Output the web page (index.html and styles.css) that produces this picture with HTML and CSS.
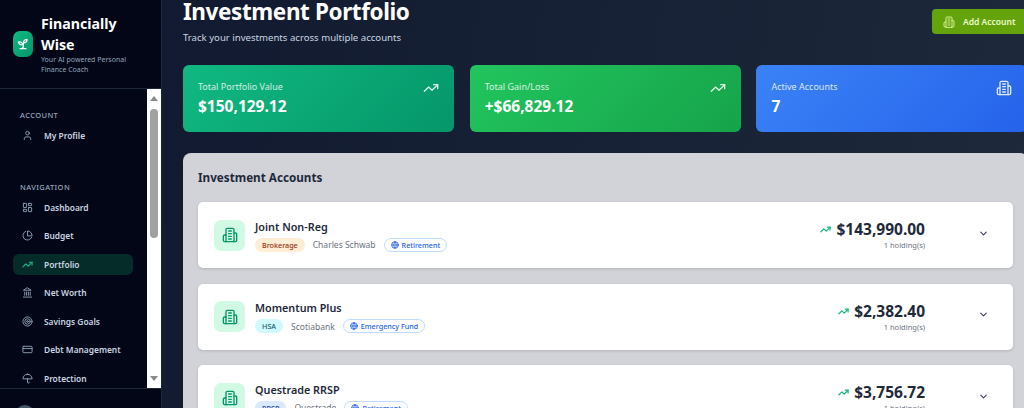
FILE: index.html
```html
<!DOCTYPE html>
<html lang="en">
<head>
<meta charset="utf-8">
<title>Investment Portfolio</title>
<link rel="stylesheet" href="styles.css">
</head>
<body>
<svg class="defs" width="0" height="0" aria-hidden="true">
  <symbol id="i-trend" viewBox="0 0 24 24"><polyline points="22 7 13.5 15.5 8.5 10.5 2 17"/><polyline points="16 7 22 7 22 13"/></symbol>
  <symbol id="i-user" viewBox="0 0 24 24"><path d="M19 21v-2a4 4 0 0 0-4-4H9a4 4 0 0 0-4 4v2"/><circle cx="12" cy="7" r="4"/></symbol>
  <symbol id="i-dash" viewBox="0 0 24 24"><rect x="3" y="3" width="7" height="9" rx="1"/><rect x="14" y="3" width="7" height="5" rx="1"/><rect x="14" y="12" width="7" height="9" rx="1"/><rect x="3" y="16" width="7" height="5" rx="1"/></symbol>
  <symbol id="i-pie" viewBox="0 0 24 24"><path d="M21.21 15.89A10 10 0 1 1 8 2.83"/><path d="M22 12A10 10 0 0 0 12 2v10z"/></symbol>
  <symbol id="i-bank" viewBox="0 0 24 24"><line x1="3" y1="22" x2="21" y2="22"/><line x1="6" y1="18" x2="6" y2="11"/><line x1="10" y1="18" x2="10" y2="11"/><line x1="14" y1="18" x2="14" y2="11"/><line x1="18" y1="18" x2="18" y2="11"/><polygon points="12 2 20 7 4 7"/></symbol>
  <symbol id="i-target" viewBox="0 0 24 24"><circle cx="12" cy="12" r="10"/><circle cx="12" cy="12" r="6"/><circle cx="12" cy="12" r="2"/></symbol>
  <symbol id="i-card" viewBox="0 0 24 24"><rect x="2" y="5" width="20" height="14" rx="2"/><line x1="2" y1="10" x2="22" y2="10"/></symbol>
  <symbol id="i-umbrella" viewBox="0 0 24 24"><path d="M22 12a10.060 10.060 0 0 0-20 0Z"/><path d="M12 12v8a2 2 0 0 0 4 0"/><path d="M12 2v1"/></symbol>
  <symbol id="i-building" viewBox="0 0 24 24"><path d="M6 22V4a2 2 0 0 1 2-2h8a2 2 0 0 1 2 2v18Z"/><path d="M6 12H4a2 2 0 0 0-2 2v6a2 2 0 0 0 2 2h2"/><path d="M18 9h2a2 2 0 0 1 2 2v9a2 2 0 0 1-2 2h-2"/><path d="M10 6h4"/><path d="M10 10h4"/><path d="M10 14h4"/><path d="M10 18h4"/></symbol>
  <symbol id="i-sprout" viewBox="0 0 24 24"><path d="M7 20h10"/><path d="M10 20c5.500-2.500.8-6.400 3-10"/><path d="M9.500 9.400c1.100.8 1.800 2.200 2.300 3.700-2 .4-3.500.4-4.800-.3-1.200-.6-2.300-1.900-3-4.200 2.800-.5 4.400 0 5.500.8z"/><path d="M14.100 6a7 7 0 0 0-1.100 4c1.900-.1 3.300-.6 4.300-1.400 1-1 1.600-2.300 1.700-4.600-2.700.1-4 1-4.900 2z"/></symbol>
  <symbol id="i-globe" viewBox="0 0 24 24"><circle cx="12" cy="12" r="10"/><path d="M12 2a14.500 14.500 0 0 0 0 20 14.500 14.500 0 0 0 0-20"/><path d="M2 12h20"/></symbol>
  <symbol id="i-chevron" viewBox="0 0 24 24"><polyline points="6 9 12 15 18 9"/></symbol>
</svg>

<div class="app">
  <aside class="sidebar">
    <header class="brand">
      <div class="logo"><svg class="ico logo-ico"><use href="#i-sprout"/></svg></div>
      <div class="brand-text">
        <div class="brand-name">Financially Wise</div>
        <div class="brand-tag">Your AI powered Personal Finance Coach</div>
      </div>
    </header>
    <div class="nav-wrap">
      <nav class="nav">
        <div class="nav-label">ACCOUNT</div>
        <a class="nav-item"><svg class="ico nav-ico"><use href="#i-user"/></svg>My Profile</a>
        <div class="nav-label nav-label-second">NAVIGATION</div>
        <a class="nav-item"><svg class="ico nav-ico"><use href="#i-dash"/></svg>Dashboard</a>
        <a class="nav-item"><svg class="ico nav-ico"><use href="#i-pie"/></svg>Budget</a>
        <a class="nav-item active"><svg class="ico nav-ico"><use href="#i-trend"/></svg>Portfolio</a>
        <a class="nav-item"><svg class="ico nav-ico"><use href="#i-bank"/></svg>Net Worth</a>
        <a class="nav-item"><svg class="ico nav-ico"><use href="#i-target"/></svg>Savings Goals</a>
        <a class="nav-item"><svg class="ico nav-ico"><use href="#i-card"/></svg>Debt Management</a>
        <a class="nav-item"><svg class="ico nav-ico"><use href="#i-umbrella"/></svg>Protection</a>
      </nav>
      <div class="scrollbar">
        <span class="arrow-up"></span>
        <span class="thumb"></span>
        <span class="arrow-down"></span>
      </div>
    </div>
    <footer class="side-foot"><span class="avatar"></span></footer>
  </aside>

  <main class="main">
    <div class="content">
      <section class="page-head">
        <div>
          <h1 class="title">Investment Portfolio</h1>
          <p class="subtitle">Track your investments across multiple accounts</p>
        </div>
        <button class="add-btn"><svg class="ico add-ico"><use href="#i-building"/></svg><span>Add Account</span></button>
      </section>

      <section class="stats">
        <div class="stat stat-emerald">
          <div><div class="stat-label">Total Portfolio Value</div><div class="stat-value">$150,129.12</div></div>
          <svg class="ico stat-ico"><use href="#i-trend"/></svg>
        </div>
        <div class="stat stat-green">
          <div><div class="stat-label">Total Gain/Loss</div><div class="stat-value">+$66,829.12</div></div>
          <svg class="ico stat-ico"><use href="#i-trend"/></svg>
        </div>
        <div class="stat stat-blue">
          <div><div class="stat-label">Active Accounts</div><div class="stat-value">7</div></div>
          <svg class="ico stat-ico"><use href="#i-building"/></svg>
        </div>
      </section>

      <section class="panel">
        <h2 class="panel-title">Investment Accounts</h2>
        <article class="account">
          <div class="acc-icon"><svg class="ico"><use href="#i-building"/></svg></div>
          <div class="acc-info">
            <div class="acc-name">Joint Non-Reg</div>
            <div class="acc-meta">
              <span class="tag tag-orange">Brokerage</span>
              <span class="provider">Charles Schwab</span>
              <span class="goal"><svg class="ico goal-ico"><use href="#i-globe"/></svg>Retirement</span>
            </div>
          </div>
          <div class="acc-value">
            <div class="amount"><svg class="ico amt-ico"><use href="#i-trend"/></svg>$143,990.00</div>
            <div class="holdings">1 holding(s)</div>
          </div>
          <svg class="ico chev"><use href="#i-chevron"/></svg>
        </article>
        <article class="account">
          <div class="acc-icon"><svg class="ico"><use href="#i-building"/></svg></div>
          <div class="acc-info">
            <div class="acc-name">Momentum Plus</div>
            <div class="acc-meta">
              <span class="tag tag-cyan">HSA</span>
              <span class="provider">Scotiabank</span>
              <span class="goal"><svg class="ico goal-ico"><use href="#i-globe"/></svg>Emergency Fund</span>
            </div>
          </div>
          <div class="acc-value">
            <div class="amount"><svg class="ico amt-ico"><use href="#i-trend"/></svg>$2,382.40</div>
            <div class="holdings">1 holding(s)</div>
          </div>
          <svg class="ico chev"><use href="#i-chevron"/></svg>
        </article>
        <article class="account">
          <div class="acc-icon"><svg class="ico"><use href="#i-building"/></svg></div>
          <div class="acc-info">
            <div class="acc-name">Questrade RRSP</div>
            <div class="acc-meta">
              <span class="tag tag-blue">RRSP</span>
              <span class="provider">Questrade</span>
              <span class="goal"><svg class="ico goal-ico"><use href="#i-globe"/></svg>Retirement</span>
            </div>
          </div>
          <div class="acc-value">
            <div class="amount"><svg class="ico amt-ico"><use href="#i-trend"/></svg>$3,756.72</div>
            <div class="holdings">1 holding(s)</div>
          </div>
          <svg class="ico chev"><use href="#i-chevron"/></svg>
        </article>
      </section>
    </div>
  </main>
</div>
</body>
</html>
```
FILE: styles.css
```css
* { box-sizing: border-box; }
html, body { margin: 0; height: 408px; overflow: hidden; }
body { font-family: "Noto Sans", "Open Sans", sans-serif; background: #131b30; }
.defs { position: absolute; }
.ico { fill: none; stroke: currentColor; stroke-width: 2; stroke-linecap: round; stroke-linejoin: round; display: block; flex: none; }

.app { display: flex; width: 1024px; height: 408px; overflow: hidden; }

/* Sidebar */
.sidebar { width: 162px; flex: none; height: 408px; display: flex; flex-direction: column; background: #020617; border-right: 1px solid #1e293b; color: #e2e8f0; }
.brand { height: 89px; flex: none; display: flex; align-items: center; gap: 8px; padding: 0 13px; border-bottom: 1px solid #1e293b; }
.logo { width: 20px; height: 26px; flex: none; border-radius: 7px; background: linear-gradient(135deg, #10b981, #059669); display: flex; align-items: center; justify-content: center; color: #fff; }
.logo-ico { width: 14px; height: 14px; stroke-width: 2.200; }
.brand-name { font-size: 14.200px; line-height: 21px; font-weight: 700; color: #fff; }
.brand-tag { font-size: 7px; line-height: 10px; color: #94a3b8; }

.nav-wrap { flex: 1; min-height: 0; display: flex; }
.nav { flex: 1; min-width: 0; overflow: hidden; padding: 21px 14px 0 13px; display: flex; flex-direction: column; }
.nav-label { font-size: 7.500px; line-height: 11px; font-weight: 500; letter-spacing: .4px; color: #94a3b8; padding-left: 7px; margin-bottom: 4px; }
.nav-label-second { margin-top: 28px; margin-bottom: 4.500px; }
.nav-item { height: 20.500px; flex: none; margin-bottom: 8px; display: flex; align-items: center; gap: 11px; padding-left: 9px; border-radius: 6px; font-size: 8.400px; font-weight: 600; color: #cbd5e1; }
.nav-item.active { background: #062c2a; color: #cbd5e1; }
.nav-item.active .nav-ico { color: #10b981; stroke-width: 2.500; }
.nav-ico { width: 11px; height: 11px; color: #94a3b8; stroke-width: 2; }

.scrollbar { width: 14px; flex: none; background: #fff; display: flex; flex-direction: column; align-items: center; padding: 7px 0 4px; }
.arrow-up { width: 0; height: 0; border-left: 4px solid transparent; border-right: 4px solid transparent; border-bottom: 5px solid #8a8a8a; flex: none; }
.arrow-down { width: 0; height: 0; border-left: 4px solid transparent; border-right: 4px solid transparent; border-top: 5px solid #8a8a8a; flex: none; margin-top: auto; margin-bottom: 3px; }
.thumb { width: 8px; height: 129px; margin-top: 8px; background: #a1a1a1; border-radius: 4px; flex: none; }

.side-foot { height: 20px; flex: none; border-top: 1px solid #1e293b; padding: 16px 0 0 15px; overflow: hidden; }
.avatar { display: block; width: 20px; height: 20px; border-radius: 50%; background: #475569; }

/* Main */
.main { flex: 1; min-width: 0; height: 408px; overflow: hidden; background: linear-gradient(100deg, #111a30, #1e293b); padding-left: 21px; }
.content { width: 845px; margin-top: -7px; }
.page-head { height: 72px; display: flex; justify-content: space-between; align-items: flex-start; }
.title { margin: 0; font-size: 22.500px; line-height: 37px; letter-spacing: -.4px; font-weight: 700; color: #fff; }
.subtitle { margin: 0; font-size: 9.600px; line-height: 15px; color: #cbd5e1; }
.add-btn { margin-top: 16px; width: 96px; height: 25px; border: 0; border-radius: 4px; background: #65a30d; color: #ecfccb; display: flex; align-items: center; gap: 8px; padding: 0 11px; white-space: nowrap; font: 600 8.500px "Noto Sans", "Open Sans", sans-serif; }
.add-ico { width: 12px; height: 12px; stroke-width: 1.800; color: #d9f99d; }

.stats { display: grid; grid-template-columns: repeat(3, 271px); gap: 15.700px; margin-bottom: 21px; }
.stat { height: 67px; border-radius: 6px; padding: 15px 15px 0; display: flex; justify-content: space-between; align-items: flex-start; color: #fff; }
.stat-emerald { background: linear-gradient(135deg, #10b981, #059669); }
.stat-green { background: linear-gradient(135deg, #22c55e, #16a34a); }
.stat-blue { background: linear-gradient(135deg, #3b82f6, #2563eb); }
.stat-label { font-size: 9px; line-height: 13px; opacity: .8; }
.stat-value { font-size: 15.500px; line-height: 22px; font-weight: 700; margin-top: 2px; }
.stat-ico { width: 16px; height: 16px; opacity: .85; }

.panel { background: #d1d3d8; border-radius: 8px 8px 0 0; padding: 15px; height: 300px; }
.panel-title { margin: 0 0 15px; font-size: 11.700px; line-height: 19px; font-weight: 700; color: #1e293b; }
.account { height: 66px; margin-bottom: 15.500px; background: #fff; border-radius: 5px; box-shadow: 0 1px 3px rgba(0,0,0,.15); padding: 0 23px 0 16px; display: flex; align-items: center; }
.acc-icon { width: 31px; height: 31px; flex: none; border-radius: 7px; background: #d1fae5; display: flex; align-items: center; justify-content: center; color: #059669; }
.acc-icon .ico { width: 16px; height: 16px; stroke-width: 2; }
.acc-info { margin-left: 10px; flex: 1; min-width: 0; }
.acc-name { font-size: 10.800px; line-height: 16px; font-weight: 600; color: #1e293b; }
.acc-meta { display: flex; align-items: center; gap: 8px; margin-top: 3px; }
.tag { height: 14px; padding: 0 7px; border-radius: 7px; font-size: 7.200px; line-height: 14px; font-weight: 500; }
.tag-orange { background: #ffedd5; color: #9a3412; }
.tag-cyan { background: #cffafe; color: #155e75; }
.tag-blue { background: #dbeafe; color: #1e40af; }
.provider { font-size: 8.500px; color: #6b7280; }
.goal { height: 14px; padding: 0 6px; border: 1px solid #bfdbfe; border-radius: 7px; display: flex; align-items: center; gap: 3px; font-size: 7.200px; font-weight: 500; color: #2563eb; }
.goal-ico { width: 8px; height: 8px; stroke-width: 2.600; }
.acc-value { text-align: right; margin-right: 53px; }
.amount { display: flex; align-items: center; justify-content: flex-end; gap: 5px; font-size: 15.500px; line-height: 21px; font-weight: 700; color: #1e293b; }
.amt-ico { width: 11px; height: 11px; color: #10b981; stroke-width: 2.600; }
.holdings { font-size: 7.500px; line-height: 11px; color: #6b7280; }
.chev { width: 11px; height: 11px; color: #374151; stroke-width: 2.400; margin: 0 1px 4px 0; }
```
